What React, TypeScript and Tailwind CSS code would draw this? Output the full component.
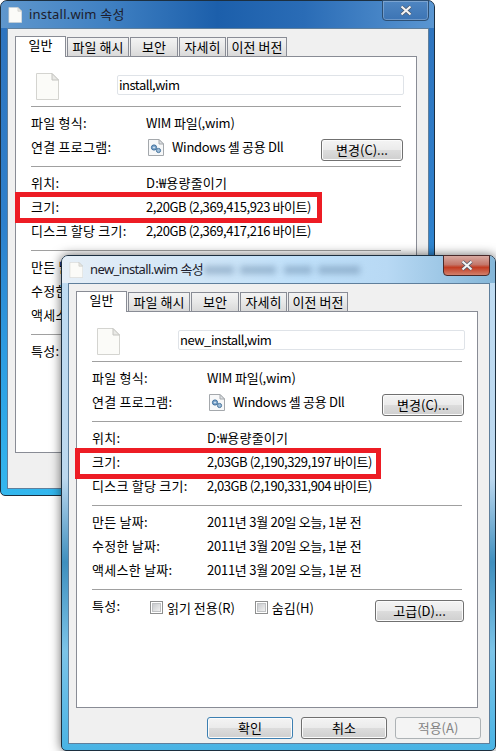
import React from 'react';

const uiFont = '[font-family:"Noto_Sans_CJK_KR","Noto_Sans",sans-serif]';

const tabs = [
  { label: '일반', w: 'w-[51px]' },
  { label: '파일 해시', w: 'w-[62px]' },
  { label: '보안', w: 'w-[48px]' },
  { label: '자세히', w: 'w-[47px]' },
  { label: '이전 버전', w: 'w-[60px]' },
];

function PageIcon({ className }: { className: string }) {
  return (
    <svg viewBox="0 0 24 27" className={className}>
      <path d="M1.5 .5H17L23.5 7V26.5H1.5Z" fill="#fbfbf8" stroke="#d4d4d0" />
      <path d="M17 .5V7H23.5Z" fill="#e9e9e6" stroke="#c4c4c0" />
    </svg>
  );
}

function AssocIcon() {
  return (
    <svg viewBox="0 0 16 17" className="w-4 h-[17px] shrink-0">
      <path d="M.5 .5H11L15.5 5V16.5H.5Z" fill="#f7f8f9" stroke="#a4a8ac" />
      <path d="M11 .5V5H15.5Z" fill="#dfe2e5" stroke="#a4a8ac" />
      <circle cx="6" cy="8.5" r="2.6" fill="#7ea6cc" stroke="#3f6f9c" />
      <circle cx="10.5" cy="11.5" r="2.1" fill="#9dbcd8" stroke="#4a769e" />
      <circle cx="6" cy="8.5" r=".8" fill="#eef4f9" />
    </svg>
  );
}

function Btn({ children, className = '' }: { children: React.ReactNode; className?: string }) {
  return (
    <div className={`h-[22px] shrink-0 rounded-[3px] border border-[#707070] bg-[linear-gradient(#f4f4f4,#ebebeb_48%,#dcdcdc_52%,#cfcfcf)] shadow-[inset_0_0_0_1px_#fbfbfb] flex items-center justify-center pb-px text-[13px] leading-none text-black ${className}`}>
      {children}
    </div>
  );
}

function Check({ label, className }: { label: string; className: string }) {
  return (
    <div className={`flex items-center gap-[4px] ${className}`}>
      <div className="w-[13px] h-[13px] border border-[#8e8f8f] bg-white p-[1px]">
        <div className="w-full h-full border border-[#c0c2c4] bg-[linear-gradient(135deg,#c9cbce,#f0f0f0)]" />
      </div>
      <span>{label}</span>
    </div>
  );
}

function Row({ label, value, children }: { label: string; value: React.ReactNode; children?: React.ReactNode }) {
  return (
    <div className="h-6 flex items-center whitespace-nowrap">
      <div className="w-[115px] shrink-0 pb-[2px] tracking-[0.25px]">{label}</div>
      {value}
      {children}
    </div>
  );
}

function Sep() {
  return <div className="h-px bg-[#a0a0a0] mt-[7px] mb-1" />;
}

type WinProps = {
  title: string;
  fileName: string;
  size: string;
  diskSize: string;
  focused?: boolean;
  position: string;
  boxClass: string;
};

function PropertiesWindow({ title, fileName, size, diskSize, focused, position, boxClass }: WinProps) {
  const frame = focused
    ? 'bg-[linear-gradient(#bfdcf2,#bcd8ef_45%,#3f8fbe_62%,#7cc4e8_80%,#49b3e4)]'
    : 'bg-[linear-gradient(#2f73bd,#2e80cc_45%,#2ea0e4_75%,#33b7ee)]';
  const bar = focused
    ? 'bg-[linear-gradient(90deg,#e6eff7,#d5e7f6_25%,#bfe0fa_55%,#b8d9f4_75%,#84b6d8)]'
    : 'bg-[linear-gradient(90deg,#5f97cd,#3f80c2_25%,#1c5fab_50%,#2a6cb6_70%,#5a96d2)]';

  return (
    <div className={`absolute ${position} rounded-t-[7px] rounded-b-[5px] border border-[#1c2f40] flex flex-col ${frame} ${focused ? 'shadow-[0_0_11px_rgba(0,0,0,0.6)]' : ''}`}>
      {/* Title bar */}
      <div className={`h-[27px] shrink-0 rounded-t-[6px] flex items-center pl-[7px] pr-[5px] ${bar} relative`}>
        <PageIcon className="w-[14px] h-[16px] mr-[7px]" />
        <span className={`[font-family:'Noto_Sans','Noto_Sans_CJK_KR',sans-serif] text-[13px] leading-none text-[#1c1c2c] ${focused ? 'tracking-[-0.6px]' : 'tracking-[0.2px]'}`}>{title}</span>
        {focused && (
          <>
            <div className="absolute left-[142px] top-[10px] w-[30px] h-[8px] bg-[#5f7f9f] opacity-45 blur-[3px]" />
            <div className="absolute left-[178px] top-[10px] w-[36px] h-[8px] bg-[#5f7f9f] opacity-45 blur-[3px]" />
            <div className="absolute left-[222px] top-[10px] w-[28px] h-[8px] bg-[#5f7f9f] opacity-45 blur-[3px]" />
            <div className="absolute left-[256px] top-[10px] w-[42px] h-[8px] bg-[#5f7f9f] opacity-45 blur-[3px]" />
          </>
        )}
        <div
          className={`absolute right-[5px] -top-px w-[47px] h-[21px] rounded-b-[4px] border flex items-center justify-center ${
            focused
              ? 'border-[#4a2a2a] bg-[linear-gradient(#d8aaa2,#c4776a_45%,#c23c22_60%,#d2806c)]'
              : 'border-[#2c4f74] bg-[linear-gradient(#4f86c2,#3c74b4)] shadow-[inset_0_0_0_1px_rgba(255,255,255,0.25)]'
          }`}
        >
          <svg viewBox="0 0 12 11" className="w-[12px] h-[11px]">
            <path d="M1.5 1.5 10.5 9.5M10.5 1.5 1.5 9.5" stroke="#4a5568" strokeWidth="3.6" />
            <path d="M1.5 1.5 10.5 9.5M10.5 1.5 1.5 9.5" stroke="#f4f4f4" strokeWidth="2.2" />
          </svg>
        </div>
      </div>

      {/* Client area */}
      <div className="flex-1 min-h-0 ml-[6px] mr-[5px] mb-[6px] border border-[#5f7f9c] bg-[#f0f0f0] pl-[7px] pr-[11px] pt-[7px] pb-1 flex flex-col">
        <div className="h-5 flex items-end gap-px shrink-0 relative z-10">
          {tabs.map((t, i) => (
            <div
              key={t.label}
              className={`${t.w} flex items-center justify-center border border-[#898c95] border-b-0 text-black ${
                i === 0
                  ? 'h-[21px] -mb-px bg-white pb-[5px]'
                  : 'h-[19px] pb-[2px] bg-[linear-gradient(#f3f3f3,#e8e8e8_50%,#d9d9d9)]'
              }`}
            >
              {t.label}
            </div>
          ))}
        </div>

        <div className="flex-1 min-h-0 border border-[#898c95] bg-white px-[15px] pt-[18px]">
          <div className="h-5 flex relative">
            <PageIcon className="w-6 h-[27px] ml-1 -mt-[2px] shrink-0" />
            <div className="ml-[58px] w-[287px] h-5 -mr-[3px] border border-[#dfe3e8] rounded-[2px] flex items-center pl-px pb-[2px] tracking-[-0.5px]">
              {fileName}
            </div>
          </div>
          <div className="h-px bg-[#a0a0a0] mt-[11px] mb-1" />
          <Row label="파일 형식:" value={<span className="pb-[2px] tracking-[-0.2px]">WIM 파일(,wim)</span>} />
          <Row
            label="연결 프로그램:"
            value={
              <span className="flex items-center gap-[8px] ml-[2px] tracking-[-0.3px]">
                <AssocIcon />
                <span className="pb-[2px]">Windows 셸 공용 Dll</span>
              </span>
            }
          >
            <Btn className="w-[82px] ml-auto -mr-[2px] mt-[6px]">변경(C)...</Btn>
          </Row>
          <Sep />
          <Row label="위치:" value={<span className="pb-[2px] tracking-[0.2px]">D:₩용량줄이기</span>} />
          <Row label="크기:" value={<span className="pb-[2px] tracking-[-0.43px]">{size}</span>} />
          <Row label="디스크 할당 크기:" value={<span className="pb-[2px] tracking-[-0.43px]">{diskSize}</span>} />
          <Sep />
          <Row label="만든 날짜:" value={<span className="pb-[2px] tracking-[-0.25px]">2011년 3월 20일 오늘, 1분 전</span>} />
          <Row label="수정한 날짜:" value={<span className="pb-[2px] tracking-[-0.25px]">2011년 3월 20일 오늘, 1분 전</span>} />
          <Row label="액세스한 날짜:" value={<span className="pb-[2px] tracking-[-0.25px]">2011년 3월 20일 오늘, 1분 전</span>} />
          <Sep />
          <div className="h-6 flex items-center whitespace-nowrap">
            <div className="w-[58px] shrink-0 pb-[2px] tracking-[0.25px]">특성:</div>
            <Check label="읽기 전용(R)" className="mt-[2px]" />
            <Check label="숨김(H)" className="mt-[2px] ml-[20px]" />
            <Btn className="w-[89px] ml-auto -mr-[2px] mt-[10px]">고급(D)...</Btn>
          </div>
        </div>

        <div className="mt-[9px] -mr-[3px] flex justify-end gap-[8px] shrink-0">
          <Btn className="w-[86px] !border-[#3c7fb1] shadow-[inset_0_0_0_1px_#5fd0f0]">확인</Btn>
          <Btn className="w-[86px]">취소</Btn>
          <div className="w-[86px] h-[22px] rounded-[3px] border border-[#adb2b5] bg-[#f4f4f4] text-[#838383] flex items-center justify-center pb-px">
            적용(A)
          </div>
        </div>
      </div>

      {/* Highlight drawn over the screenshot */}
      <div className={`absolute border-[5px] border-[#ed1c24] ${boxClass}`} />
    </div>
  );
}

export default function App() {
  return (
    <div className={`relative w-[496px] h-[751px] overflow-hidden bg-white text-black text-[13px] leading-none ${uiFont}`}>
      <PropertiesWindow
        title="install.wim 속성"
        fileName="install,wim"
        size="2,20GB (2,369,415,923 바이트)"
        diskSize="2,20GB (2,369,417,216 바이트)"
        position="left-0 top-0 w-[435px] h-[496px]"
        boxClass="left-[14px] top-[191px] w-[307px] h-[31px]"
      />
      <PropertiesWindow
        focused
        title="new_install.wim 속성"
        fileName="new_install,wim"
        size="2,03GB (2,190,329,197 바이트)"
        diskSize="2,03GB (2,190,331,904 바이트)"
        position="left-[61px] top-[255px] w-[435px] h-[496px]"
        boxClass="left-[13px] top-[192px] w-[306px] h-[31px]"
      />
    </div>
  );
}
